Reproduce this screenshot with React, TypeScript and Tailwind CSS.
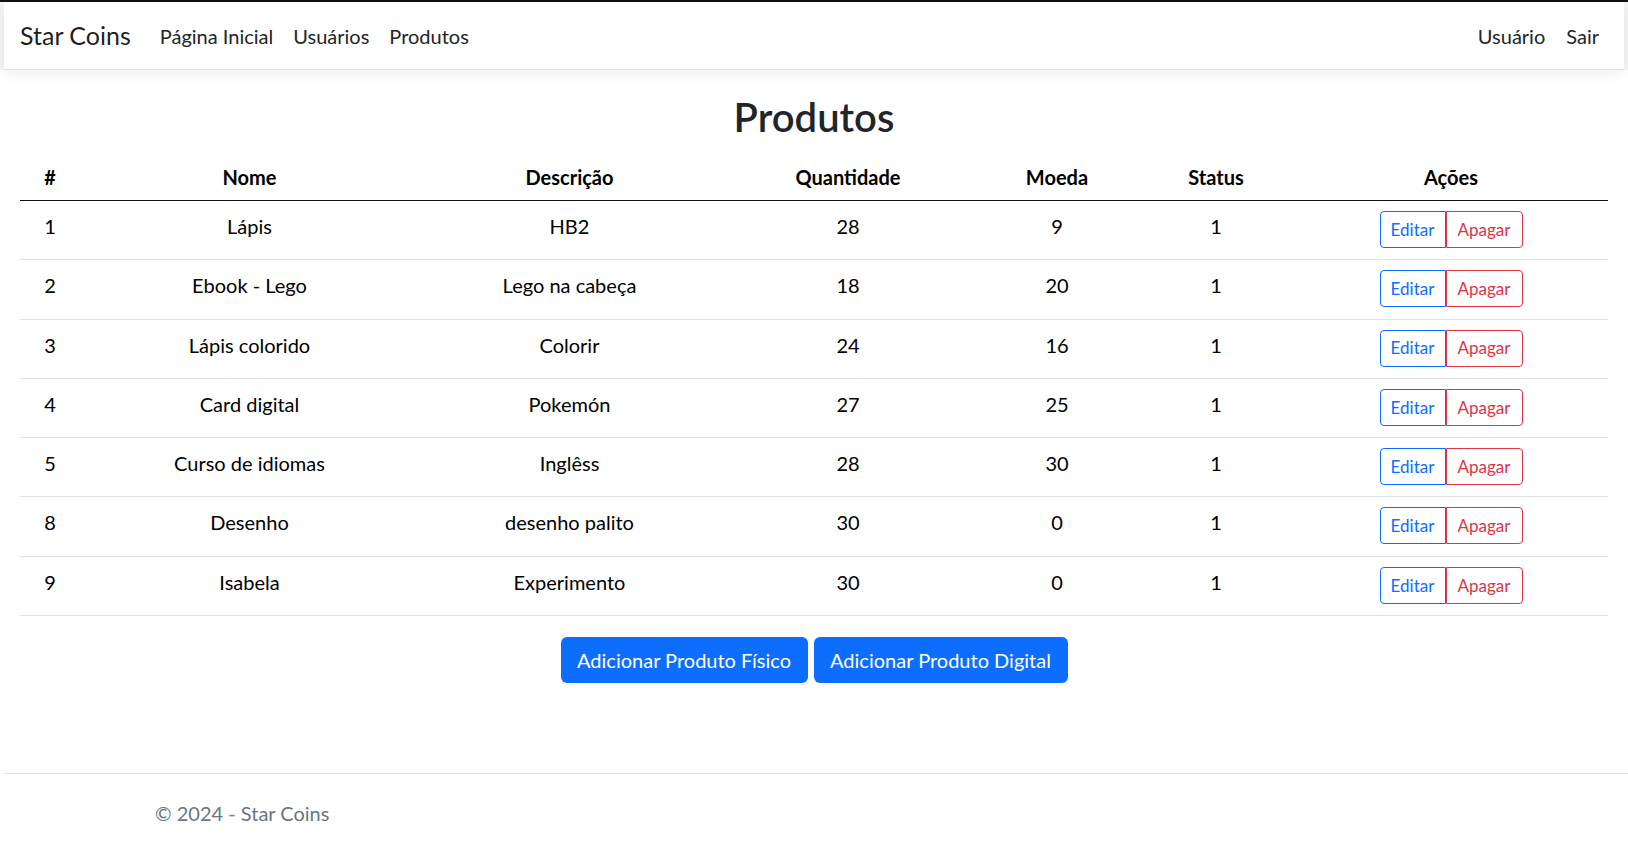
const PRODUCTS = [
  { id: 1, nome: "Lápis", descricao: "HB2", quantidade: 28, moeda: 9, status: 1 },
  { id: 2, nome: "Ebook - Lego", descricao: "Lego na cabeça", quantidade: 18, moeda: 20, status: 1 },
  { id: 3, nome: "Lápis colorido", descricao: "Colorir", quantidade: 24, moeda: 16, status: 1 },
  { id: 4, nome: "Card digital", descricao: "Pokemón", quantidade: 27, moeda: 25, status: 1 },
  { id: 5, nome: "Curso de idiomas", descricao: "Inglêss", quantidade: 28, moeda: 30, status: 1 },
  { id: 8, nome: "Desenho", descricao: "desenho palito", quantidade: 30, moeda: 0, status: 1 },
  { id: 9, nome: "Isabela", descricao: "Experimento", quantidade: 30, moeda: 0, status: 1 },
];

const HEADERS = ["#", "Nome", "Descrição", "Quantidade", "Moeda", "Status", "Ações"];

export default function App() {
  return (
    <div className="min-h-screen bg-white font-['Lato',sans-serif] text-[#212529]">
      {/* barra superior */}
      <div className="h-[2px] bg-[#111]" />

      {/* navbar */}
      <div className="bg-[#f4f4f4] px-[4px]">
        <nav className="h-[68px] bg-white border-b border-[#dee2e6] shadow-[0_4px_12px_rgba(0,0,0,0.06)] flex items-center pl-[16px] pr-[25px]">
          <span className="text-[25px] text-black/90 leading-none">Star Coins</span>
          <div className="flex gap-[20px] ml-[29px] text-[20px]">
            <a href="#">Página Inicial</a>
            <a href="#">Usuários</a>
            <a href="#">Produtos</a>
          </div>
          <div className="ml-auto flex gap-[21px] text-[20px]">
            <a href="#">Usuário</a>
            <a href="#">Sair</a>
          </div>
        </nav>
      </div>

      {/* conteúdo */}
      <main className="px-[20px] pt-[23px]">
        <h1 className="text-center text-[40px] leading-[48px] font-semibold">Produtos</h1>

        <table className="w-full table-fixed mt-[9px] text-[20px] text-black">
          <colgroup>
            <col className="w-[60px]" />
            <col className="w-[339px]" />
            <col className="w-[301px]" />
            <col className="w-[256px]" />
            <col className="w-[162px]" />
            <col className="w-[156px]" />
            <col />
          </colgroup>
          <thead>
            <tr className="border-b border-[#111]">
              {HEADERS.map((h) => (
                <th key={h} className="pt-[12px] pb-[8px] leading-[30px] font-bold text-center">
                  {h}
                </th>
              ))}
            </tr>
          </thead>
          <tbody>
            {PRODUCTS.map((p) => (
              <tr key={p.id} className="border-b border-[#dee2e6] align-top">
                <td className="pt-[10px] pb-[11.3px] leading-[30px] text-center">{p.id}</td>
                <td className="pt-[10px] pb-[11.3px] leading-[30px] text-center">{p.nome}</td>
                <td className="pt-[10px] pb-[11.3px] leading-[30px] text-center">{p.descricao}</td>
                <td className="pt-[10px] pb-[11.3px] leading-[30px] text-center">{p.quantidade}</td>
                <td className="pt-[10px] pb-[11.3px] leading-[30px] text-center">{p.moeda}</td>
                <td className="pt-[10px] pb-[11.3px] leading-[30px] text-center">{p.status}</td>
                <td className="pt-[10px] pb-[11.3px] text-center">
                  <div className="inline-flex h-[37px] text-[17px]">
                    <button className="w-[66px] border border-[#0d6efd] text-[#0d6efd] rounded-l-[4px]">
                      Editar
                    </button>
                    <button className="w-[77px] border border-[#dc3545] text-[#dc3545] rounded-r-[4px]">
                      Apagar
                    </button>
                  </div>
                </td>
              </tr>
            ))}
          </tbody>
        </table>

        <div className="flex justify-center gap-[6px] mt-[21px]">
          <button className="w-[247px] h-[46px] rounded-[6px] bg-[#0d6efd] text-white text-[20px]">
            Adicionar Produto Físico
          </button>
          <button className="w-[254px] h-[46px] rounded-[6px] bg-[#0d6efd] text-white text-[20px]">
            Adicionar Produto Digital
          </button>
        </div>
      </main>

      {/* rodapé */}
      <footer className="ml-[4px] mt-[90px] border-t border-[#dee2e6] h-[78px] flex items-center pl-[151px] text-[20px] text-[#6c757d]">
        © 2024 - Star Coins
      </footer>
    </div>
  );
}
